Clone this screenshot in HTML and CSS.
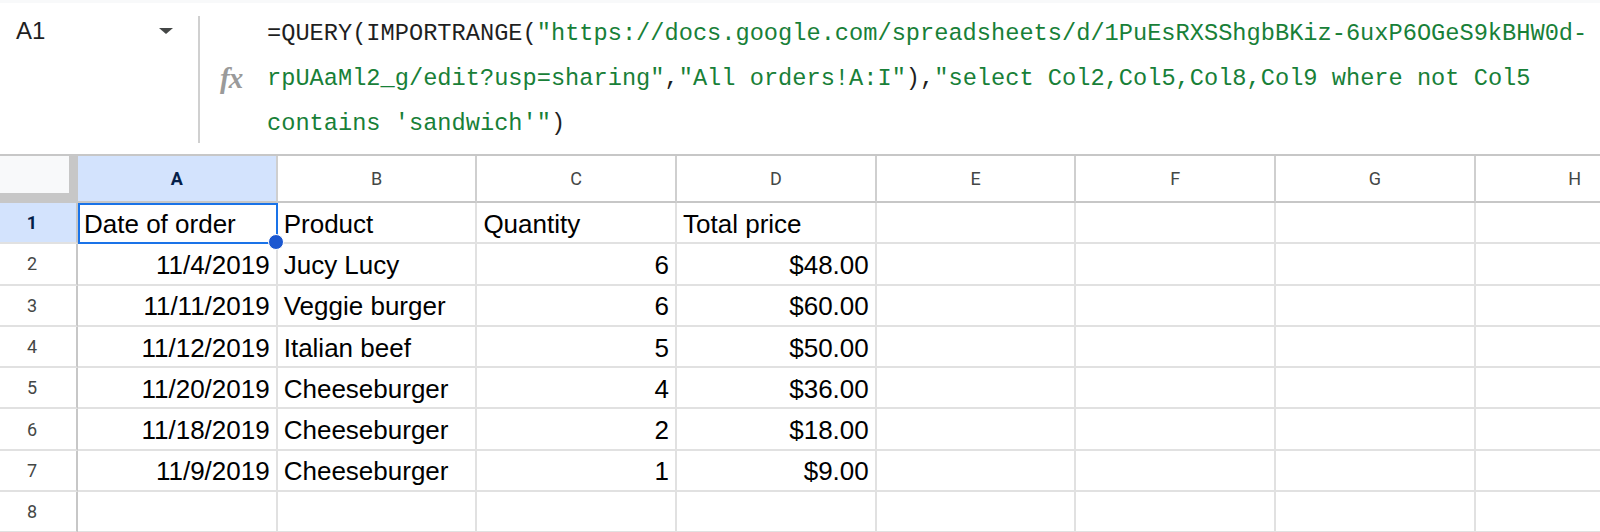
FILE: index.html
```
<!DOCTYPE html>
<html lang="en">

<head>
    <meta charset="UTF-8">
    <meta name="viewport" content="width=device-width, initial-scale=1.0">
    <title>Orders - QUERY</title>
    <link rel="stylesheet" href="styles.css">
</head>

<body>
    <div class="formula-bar">
        <div class="name-box">
            <span class="cell-ref">A1</span>
            <span class="caret"></span>
        </div>
        <div class="divider"></div>
        <div class="fx">fx</div>
        <div class="formula"><span class="op">=QUERY(IMPORTRANGE(</span><span class="str">"https://docs.google.com/spreadsheets/d/1PuEsRXSShgbBKiz-6uxP6OGeS9kBHW0d-</span><br><span class="str">rpUAaMl2_g/edit?usp=sharing"</span><span class="op">,</span><span class="str">"All orders!A:I"</span><span class="op">),</span><span class="str">"select Col2,Col5,Col8,Col9 where not Col5</span><br><span class="str">contains 'sandwich'"</span><span class="op">)</span></div>
    </div>

    <div class="sheet">
        <div class="sheet-row col-heads">
            <div class="corner"></div>
            <div class="col-head active">A</div>
            <div class="col-head">B</div>
            <div class="col-head">C</div>
            <div class="col-head">D</div>
            <div class="col-head">E</div>
            <div class="col-head">F</div>
            <div class="col-head">G</div>
            <div class="col-head">H</div>
        </div>
        <div class="sheet-row">
            <div class="row-head active">1</div>
            <div class="cell selected">Date of order</div>
            <div class="cell">Product</div>
            <div class="cell">Quantity</div>
            <div class="cell">Total price</div>
            <div class="cell"></div><div class="cell"></div><div class="cell"></div><div class="cell"></div>
        </div>
        <div class="sheet-row">
            <div class="row-head">2</div>
            <div class="cell num">11/4/2019</div>
            <div class="cell">Jucy Lucy</div>
            <div class="cell num">6</div>
            <div class="cell num">$48.00</div>
            <div class="cell"></div><div class="cell"></div><div class="cell"></div><div class="cell"></div>
        </div>
        <div class="sheet-row">
            <div class="row-head">3</div>
            <div class="cell num">11/11/2019</div>
            <div class="cell">Veggie burger</div>
            <div class="cell num">6</div>
            <div class="cell num">$60.00</div>
            <div class="cell"></div><div class="cell"></div><div class="cell"></div><div class="cell"></div>
        </div>
        <div class="sheet-row">
            <div class="row-head">4</div>
            <div class="cell num">11/12/2019</div>
            <div class="cell">Italian beef</div>
            <div class="cell num">5</div>
            <div class="cell num">$50.00</div>
            <div class="cell"></div><div class="cell"></div><div class="cell"></div><div class="cell"></div>
        </div>
        <div class="sheet-row">
            <div class="row-head">5</div>
            <div class="cell num">11/20/2019</div>
            <div class="cell">Cheeseburger</div>
            <div class="cell num">4</div>
            <div class="cell num">$36.00</div>
            <div class="cell"></div><div class="cell"></div><div class="cell"></div><div class="cell"></div>
        </div>
        <div class="sheet-row">
            <div class="row-head">6</div>
            <div class="cell num">11/18/2019</div>
            <div class="cell">Cheeseburger</div>
            <div class="cell num">2</div>
            <div class="cell num">$18.00</div>
            <div class="cell"></div><div class="cell"></div><div class="cell"></div><div class="cell"></div>
        </div>
        <div class="sheet-row">
            <div class="row-head">7</div>
            <div class="cell num">11/9/2019</div>
            <div class="cell">Cheeseburger</div>
            <div class="cell num">1</div>
            <div class="cell num">$9.00</div>
            <div class="cell"></div><div class="cell"></div><div class="cell"></div><div class="cell"></div>
        </div>
        <div class="sheet-row">
            <div class="row-head">8</div>
            <div class="cell"></div><div class="cell"></div><div class="cell"></div><div class="cell"></div>
            <div class="cell"></div><div class="cell"></div><div class="cell"></div><div class="cell"></div>
        </div>
    </div>
</body>

</html>
```

FILE: styles.css
```
body {
    margin: 0;
    font-family: 'Liberation Sans', Arial, sans-serif;
    background-color: #ffffff;
    color: #000000;
    overflow: hidden;
}

/* formula bar */
.formula-bar {
    display: flex;
    align-items: flex-start;
    height: 151px;
    border-top: 3px solid #f8f9fa;
    border-bottom: 2px solid #c7c7c7;
}

.name-box {
    display: flex;
    align-items: flex-start;
    justify-content: space-between;
    width: 198px;
    padding: 0 25px 0 16px;
    box-sizing: border-box;
}

.cell-ref {
    font-size: 24px;
    line-height: 45px;
    padding-top: 5px;
    color: #1f1f1f;
}

.caret {
    margin-top: 25px;
    border-left: 7.5px solid transparent;
    border-right: 7.5px solid transparent;
    border-top: 6px solid #444746;
}

.divider {
    width: 2px;
    height: 127px;
    margin-top: 13px;
    background-color: #d0d0d0;
}

.fx {
    width: 67px;
    padding-left: 20px;
    box-sizing: border-box;
    margin-top: 53px;
    font-family: 'Liberation Serif', serif;
    font-style: italic;
    font-weight: bold;
    font-size: 29px;
    line-height: 45px;
    letter-spacing: -1px;
    color: #9a9a9a;
}

.formula {
    padding-top: 8px;
    font-family: 'Liberation Mono', 'DejaVu Sans Mono', monospace;
    font-size: 23.67px;
    line-height: 45px;
    white-space: pre;
}

.formula .op {
    color: #1f1f1f;
}

.formula .str {
    color: #188038;
}

/* grid */
.sheet-row {
    display: grid;
    grid-template-columns: 78px repeat(8, 199.7px);
    height: 41.3px;
}

.sheet-row > div {
    box-sizing: border-box;
}

.col-heads {
    height: 47px;
}

.corner {
    background-color: #f8f9fa;
    border-right: 9px solid #c7c7c7;
    border-bottom: 10px solid #c7c7c7;
}

.col-head {
    display: flex;
    align-items: center;
    justify-content: center;
    font-family: Roboto, 'Liberation Sans', sans-serif;
    font-size: 18px;
    color: #444746;
    border-right: 2px solid #cfcfcf;
    border-bottom: 2px solid #c7c7c7;
}

.row-head {
    display: flex;
    align-items: center;
    justify-content: center;
    padding-right: 12px;
    font-family: Roboto, 'Liberation Sans', sans-serif;
    font-size: 18px;
    color: #444746;
    border-right: 2px solid #c7c7c7;
    border-bottom: 2px solid #e1e1e1;
}

.col-head.active,
.row-head.active {
    background-color: #d3e3fd;
    color: #041e49;
    font-weight: bold;
}

.cell {
    display: flex;
    align-items: center;
    padding: 3px 6px 0;
    font-size: 26px;
    white-space: nowrap;
    border-right: 2px solid #e1e1e1;
    border-bottom: 2px solid #e1e1e1;
}

.cell.num {
    justify-content: flex-end;
}

.cell.selected {
    position: relative;
    z-index: 2;
    outline: 2.5px solid #1a73e8;
    outline-offset: -2px;
}

.cell.selected::after {
    content: '';
    position: absolute;
    right: -8px;
    bottom: -8px;
    width: 14px;
    height: 14px;
    border: 1px solid #ffffff;
    border-radius: 50%;
    background-color: #1b57d0;
}
```
